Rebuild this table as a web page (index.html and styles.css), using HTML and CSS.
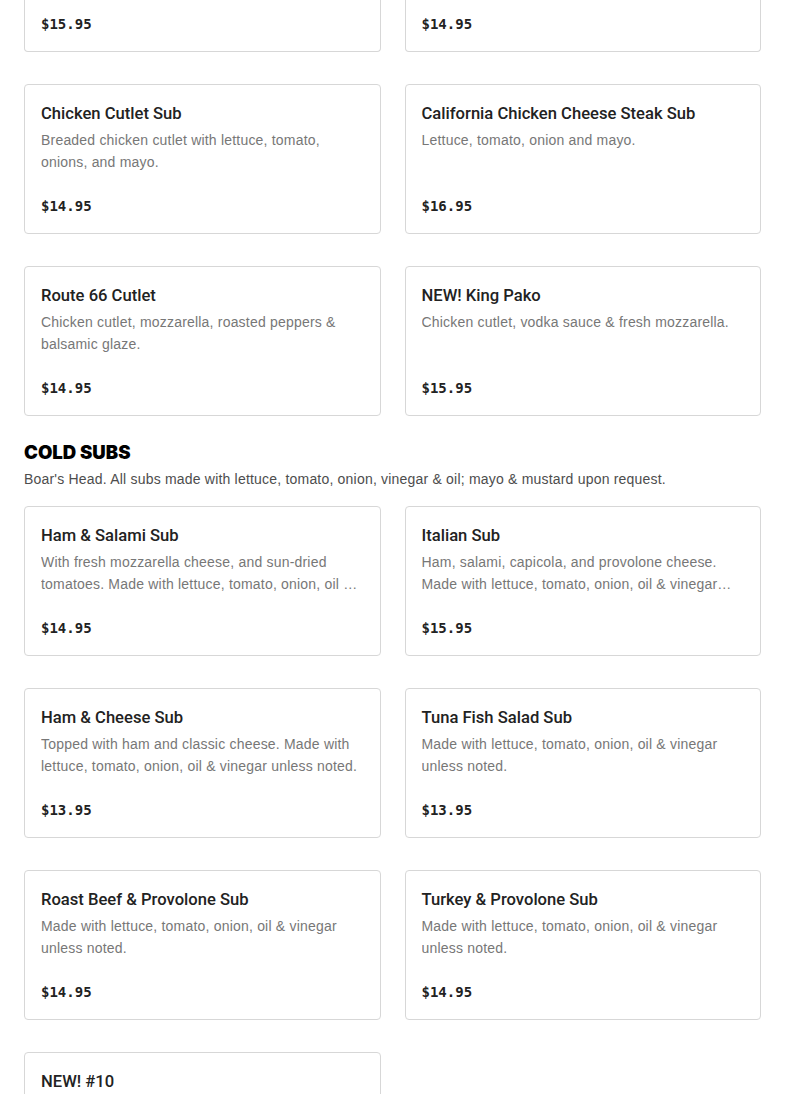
FILE: index.html
```html
<!DOCTYPE html>
<html lang="en">
<head>
<meta charset="utf-8">
<title>Menu</title>
<link rel="stylesheet" href="styles.css">
</head>
<body>
<main class="menu">
  <section class="section">
    <div class="grid">
      <article class="card card--clipped"><p class="price">$15.95</p></article>
      <article class="card card--clipped"><p class="price">$14.95</p></article>
      <article class="card">
        <h3 class="title">Chicken Cutlet Sub</h3>
        <p class="desc">Breaded chicken cutlet with lettuce, tomato, onions, and mayo.</p>
        <p class="price">$14.95</p>
      </article>
      <article class="card">
        <h3 class="title">California Chicken Cheese Steak Sub</h3>
        <p class="desc">Lettuce, tomato, onion and mayo.</p>
        <p class="price">$16.95</p>
      </article>
      <article class="card">
        <h3 class="title">Route 66 Cutlet</h3>
        <p class="desc">Chicken cutlet, mozzarella, roasted peppers &amp; balsamic glaze.</p>
        <p class="price">$14.95</p>
      </article>
      <article class="card">
        <h3 class="title">NEW! King Pako</h3>
        <p class="desc">Chicken cutlet, vodka sauce &amp; fresh mozzarella.</p>
        <p class="price">$15.95</p>
      </article>
    </div>
  </section>

  <section class="section section--titled">
    <h2 class="section-title">COLD SUBS</h2>
    <p class="section-sub">Boar's Head. All subs made with lettuce, tomato, onion, vinegar &amp; oil; mayo &amp; mustard upon request.</p>
    <div class="grid">
      <article class="card">
        <h3 class="title">Ham &amp; Salami Sub</h3>
        <p class="desc">With fresh mozzarella cheese, and sun-dried tomatoes. Made with lettuce, tomato, onion, oil &amp; vinegar unless noted.</p>
        <p class="price">$14.95</p>
      </article>
      <article class="card">
        <h3 class="title">Italian Sub</h3>
        <p class="desc">Ham, salami, capicola, and provolone cheese. Made with lettuce, tomato, onion, oil &amp; vinegar unless noted.</p>
        <p class="price">$15.95</p>
      </article>
      <article class="card">
        <h3 class="title">Ham &amp; Cheese Sub</h3>
        <p class="desc">Topped with ham and classic cheese. Made with lettuce, tomato, onion, oil &amp; vinegar unless noted.</p>
        <p class="price">$13.95</p>
      </article>
      <article class="card">
        <h3 class="title">Tuna Fish Salad Sub</h3>
        <p class="desc">Made with lettuce, tomato, onion, oil &amp; vinegar unless noted.</p>
        <p class="price">$13.95</p>
      </article>
      <article class="card">
        <h3 class="title">Roast Beef &amp; Provolone Sub</h3>
        <p class="desc">Made with lettuce, tomato, onion, oil &amp; vinegar unless noted.</p>
        <p class="price">$14.95</p>
      </article>
      <article class="card">
        <h3 class="title">Turkey &amp; Provolone Sub</h3>
        <p class="desc">Made with lettuce, tomato, onion, oil &amp; vinegar unless noted.</p>
        <p class="price">$14.95</p>
      </article>
      <article class="card">
        <h3 class="title">NEW! #10</h3>
      </article>
    </div>
  </section>
</main>
</body>
</html>
```

FILE: styles.css
```css
* { box-sizing: border-box; }

html, body {
  margin: 0;
  padding: 0;
  background: #fff;
}

body {
  font-family: "Liberation Sans", Arial, sans-serif;
  color: #222;
  overflow: hidden;
}

.menu {
  padding: 0 24px;
}

.grid {
  display: grid;
  grid-template-columns: 1fr 1fr;
  column-gap: 24px;
  row-gap: 32px;
}

.card {
  display: flex;
  flex-direction: column;
  height: 150px;
  padding: 16px;
  border: 1px solid #d7d7d7;
  border-radius: 4px;
  background: #fff;
}

.card--clipped {
  height: 52px;
  padding-top: 12px;
  border-top: none;
  border-radius: 0 0 4px 4px;
}

.title {
  margin: 0 0 3px;
  font-family: Roboto, "Liberation Sans", Arial, sans-serif;
  font-size: 16.6px;
  line-height: 25px;
  font-weight: 500;
  color: #222;
}

.desc {
  margin: 0;
  font-size: 14px;
  line-height: 22px;
  letter-spacing: 0.2px;
  color: #777;
  display: -webkit-box;
  -webkit-line-clamp: 2;
  -webkit-box-orient: vertical;
  overflow: hidden;
}

.price {
  margin: auto 0 0;
  font-family: "DejaVu Sans Mono", "Liberation Mono", monospace;
  font-size: 14px;
  line-height: 22px;
  font-weight: 700;
  color: #222;
}

.section--titled {
  margin-top: 24px;
}

.section-title {
  margin: 0;
  font-family: Inter, "Liberation Sans", Arial, sans-serif;
  font-size: 18.6px;
  line-height: 24px;
  font-weight: 900;
  letter-spacing: 0;
  color: #000;
}

.section-sub {
  margin: 5px 0 17px;
  font-size: 14px;
  line-height: 20px;
  letter-spacing: 0.2px;
  color: #4d4d4d;
}
```
